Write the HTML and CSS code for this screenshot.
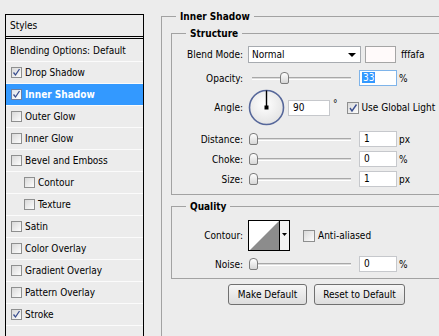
FILE: index.html
```html
<!DOCTYPE html>
<html lang="en">

<head>
    <meta charset="UTF-8">
    <meta name="viewport" content="width=device-width, initial-scale=1.0">
    <title>Layer Style</title>
    <link rel="stylesheet" href="styles.css">
</head>

<body>
    <div class="dialog">
        <div class="styles-panel">
            <div class="styles-head">Styles</div>
            <ul class="style-list">
                <li class="style-item plain">Blending Options: Default</li>
                <li class="style-item"><span class="cb"><svg width="9" height="9" viewBox="0 0 9 9"><path d="M1.5 4.5 L3.5 7 L7.5 1" fill="none" stroke="#3b4f8f" stroke-width="1.3"/></svg></span>Drop Shadow</li>
                <li class="style-item active"><span class="cb"><svg width="9" height="9" viewBox="0 0 9 9"><path d="M1.5 4.5 L3.5 7 L7.5 1" fill="none" stroke="#3b4f8f" stroke-width="1.3"/></svg></span>Inner Shadow</li>
                <li class="style-item"><span class="cb"></span>Outer Glow</li>
                <li class="style-item"><span class="cb"></span>Inner Glow</li>
                <li class="style-item"><span class="cb"></span>Bevel and Emboss</li>
                <li class="style-item sub"><span class="cb"></span>Contour</li>
                <li class="style-item sub"><span class="cb"></span>Texture</li>
                <li class="style-item"><span class="cb"></span>Satin</li>
                <li class="style-item"><span class="cb"></span>Color Overlay</li>
                <li class="style-item"><span class="cb"></span>Gradient Overlay</li>
                <li class="style-item"><span class="cb"></span>Pattern Overlay</li>
                <li class="style-item"><span class="cb"><svg width="9" height="9" viewBox="0 0 9 9"><path d="M1.5 4.5 L3.5 7 L7.5 1" fill="none" stroke="#3b4f8f" stroke-width="1.3"/></svg></span>Stroke</li>
            </ul>
        </div>

        <div class="settings">
            <fieldset class="group outer">
                <legend>Inner Shadow</legend>

                <fieldset class="group inner structure">
                    <legend>Structure</legend>
                    <div class="row row-blend">
                        <span class="label">Blend Mode:</span>
                        <div class="select"><span>Normal</span><span class="caret"></span></div>
                        <span class="swatch"></span>
                        <span class="hex">fffafa</span>
                    </div>
                    <div class="row row-opacity">
                        <span class="label">Opacity:</span>
                        <div class="slider"><span class="track"></span><span class="thumb thumb-opacity"></span></div>
                        <div class="num focus"><span class="sel">33</span></div>
                        <span class="unit">%</span>
                    </div>
                    <div class="row row-angle">
                        <span class="label">Angle:</span>
                        <svg class="dial" width="37" height="37" viewBox="0 0 37 37">
                            <defs>
                                <radialGradient id="dialFill" cx="0.45" cy="0.4" r="0.6">
                                    <stop offset="0" stop-color="#ffffff"/>
                                    <stop offset="1" stop-color="#e4e4e4"/>
                                </radialGradient>
                            </defs>
                            <circle cx="18.5" cy="18.5" r="17" fill="url(#dialFill)" stroke="#56679a" stroke-width="1.6"/>
                            <line x1="18.5" y1="18.5" x2="18.5" y2="1.5" stroke="#000" stroke-width="1.4"/>
                            <rect x="16.5" y="16.5" width="4" height="4" fill="#000"/>
                        </svg>
                        <div class="num wide">90</div>
                        <span class="deg">°</span>
                        <span class="cb cb-lg"><svg width="10" height="10" viewBox="0 0 10 10"><path d="M2 5 L4 8 L8.5 1.5" fill="none" stroke="#3b4f8f" stroke-width="1.4"/></svg></span>
                        <span>Use Global Light</span>
                    </div>
                    <div class="row row-num">
                        <span class="label">Distance:</span>
                        <div class="slider"><span class="track"></span><span class="thumb"></span></div>
                        <div class="num">1</div>
                        <span class="unit">px</span>
                    </div>
                    <div class="row row-num">
                        <span class="label">Choke:</span>
                        <div class="slider"><span class="track"></span><span class="thumb"></span></div>
                        <div class="num">0</div>
                        <span class="unit">%</span>
                    </div>
                    <div class="row row-num">
                        <span class="label">Size:</span>
                        <div class="slider"><span class="track"></span><span class="thumb"></span></div>
                        <div class="num">1</div>
                        <span class="unit">px</span>
                    </div>
                </fieldset>

                <fieldset class="group inner quality">
                    <legend>Quality</legend>
                    <div class="row row-contour">
                        <span class="label">Contour:</span>
                        <svg class="contour" width="42" height="31" viewBox="0 0 42 31">
                            <rect x="0.5" y="0.5" width="41" height="30" fill="#fff" stroke="#000"/>
                            <polygon points="2,30 31,1 31,30" fill="#8c8c8c"/>
                            <rect x="32" y="1" width="9" height="29" fill="#f2f2f2"/>
                            <line x1="31.5" y1="0.5" x2="31.5" y2="30.5" stroke="#000"/>
                            <polygon points="34,13 39,13 36.5,16" fill="#000"/>
                        </svg>
                        <span class="cb cb-lg cb-gap"></span>
                        <span>Anti-aliased</span>
                    </div>
                    <div class="row row-noise">
                        <span class="label">Noise:</span>
                        <div class="slider"><span class="track"></span><span class="thumb"></span></div>
                        <div class="num">0</div>
                        <span class="unit">%</span>
                    </div>
                </fieldset>

                <div class="buttons">
                    <button class="btn btn-make">Make Default</button>
                    <button class="btn btn-reset">Reset to Default</button>
                </div>
            </fieldset>
        </div>
    </div>
</body>

</html>
```
FILE: styles.css
```css
body {
    margin: 0;
    background-color: #ececec;
    font-family: "DejaVu Sans Condensed", "DejaVu Sans", sans-serif;
    font-stretch: condensed;
    font-size: 10px;
    color: #000;
    overflow: hidden;
}

.dialog {
    display: flex;
    height: 336px;
    overflow: hidden;
}

/* left list of styles */
.styles-panel {
    width: 139px;
    margin: 14px 0 0 5px;
    border: 1px solid #000;
    border-bottom: 0;
    box-sizing: border-box;
    flex: none;
}

.styles-head {
    height: 21px;
    line-height: 21px;
    padding-left: 4px;
    border-bottom: 3px double #000;
}

.style-list {
    list-style: none;
    margin: 0;
    padding: 1px 0 0;
}

.style-item {
    display: flex;
    align-items: center;
    height: 21px;
    padding-left: 5px;
    border-bottom: 1px solid #fbfbfb;
}

.style-item.plain {
    padding-left: 4px;
}

.style-item.sub {
    padding-left: 18px;
}

.style-item.active {
    background-color: #3399ff;
    color: #fff;
    font-weight: bold;
}

.cb {
    width: 11px;
    height: 11px;
    box-sizing: border-box;
    border: 1px solid #8e8f8f;
    background: linear-gradient(135deg, #d9d9d9, #fdfdfd);
    margin-right: 3px;
    display: flex;
    align-items: center;
    justify-content: center;
    flex: none;
}

.style-item.active .cb {
    border-color: #6f7f9f;
    background: linear-gradient(135deg, #dfe3ea, #ffffff);
}

.cb-lg {
    width: 12px;
    height: 12px;
}

/* right settings */
.settings {
    margin-left: 17px;
    flex: 1;
    min-width: 0;
    overflow: hidden;
}

.group {
    margin: 0;
    padding: 0;
    border: 1px solid #a2a2a2;
    min-width: 0;
}

.group > legend {
    font-weight: bold;
    padding: 0 4px;
    line-height: 13px;
}

.outer {
    margin-top: 10px;
    padding-left: 9px;
    width: 300px;
    height: 340px;
    box-sizing: border-box;
}

.outer > legend {
    margin-left: 5px;
}

.inner > legend {
    margin-left: 14px;
}

.structure {
    margin-top: 4px;
    padding: 6px 0 7px;
}

.quality {
    margin-top: 5px;
    padding: 7px 0 6px;
}

.row {
    display: flex;
    align-items: center;
}

.label {
    width: 71px;
    margin-right: 5px;
    text-align: right;
    flex: none;
}

.row-blend {
    height: 17px;
}

.row-opacity {
    height: 16px;
    margin-top: 7px;
}

.row-angle {
    height: 37px;
    margin-top: 3px;
}

.row-num {
    height: 16px;
    margin-top: 4px;
}

.row-angle + .row-num {
    margin-top: 5px;
}

.row-contour {
    height: 31px;
}

.row-noise {
    height: 16px;
    margin-top: 5px;
}

.select {
    width: 113px;
    height: 17px;
    box-sizing: border-box;
    border: 1px solid #a7abb0;
    background-color: #fff;
    display: flex;
    align-items: center;
    justify-content: space-between;
    padding: 0 4px 0 3px;
}

.caret {
    border-top: 4px solid #000;
    border-left: 4px solid transparent;
    border-right: 4px solid transparent;
}

.swatch {
    width: 31px;
    height: 17px;
    margin-left: 4px;
    box-sizing: border-box;
    border: 1px solid #a5a5a5;
    background-color: #fffafa;
}

.hex {
    margin-left: 5px;
}

.slider {
    position: relative;
    width: 103px;
    height: 16px;
    margin-right: 8px;
    display: flex;
    align-items: center;
}

.track {
    flex: 1;
    margin-left: 4px;
    height: 1px;
    border-top: 1px solid #a8a8a8;
    border-bottom: 1px solid #ffffff;
    background-color: #dcdcdc;
}

.thumb {
    position: absolute;
    top: 2px;
    left: 1px;
    width: 9px;
    height: 12px;
    box-sizing: border-box;
    border: 1px solid #7c7c7c;
    border-radius: 4px 4px 2px 2px;
    background: linear-gradient(#ffffff, #d6d6d6);
}

.thumb-opacity {
    left: 32px;
}

.num {
    width: 38px;
    height: 16px;
    box-sizing: border-box;
    border: 1px solid #c6c8cc;
    background-color: #fff;
    padding-left: 4px;
    line-height: 14px;
}

.num.focus {
    border-color: #7eb4ea;
    padding-left: 2px;
}

.num.wide {
    width: 42px;
    margin-left: 3px;
}

.sel {
    background-color: #3399ff;
    color: #fff;
    padding: 0 1px;
}

.unit {
    margin-left: 2px;
}

.deg {
    margin-left: 3px;
    align-self: flex-start;
    margin-top: 9px;
}

.deg + .cb {
    margin-left: 9px;
}

.cb-gap {
    margin-left: 13px;
}

.contour {
    display: block;
}

.buttons {
    display: flex;
    gap: 7px;
    margin: 5px 0 0 57px;
}

.btn {
    height: 21px;
    padding: 0;
    font-family: inherit;
    font-stretch: condensed;
    font-size: 10px;
    color: #000;
    border: 1px solid #707070;
    border-radius: 3px;
    background: linear-gradient(#f6f6f6, #dddddd);
}

.btn-make {
    width: 79px;
}

.btn-reset {
    width: 91px;
}
```
